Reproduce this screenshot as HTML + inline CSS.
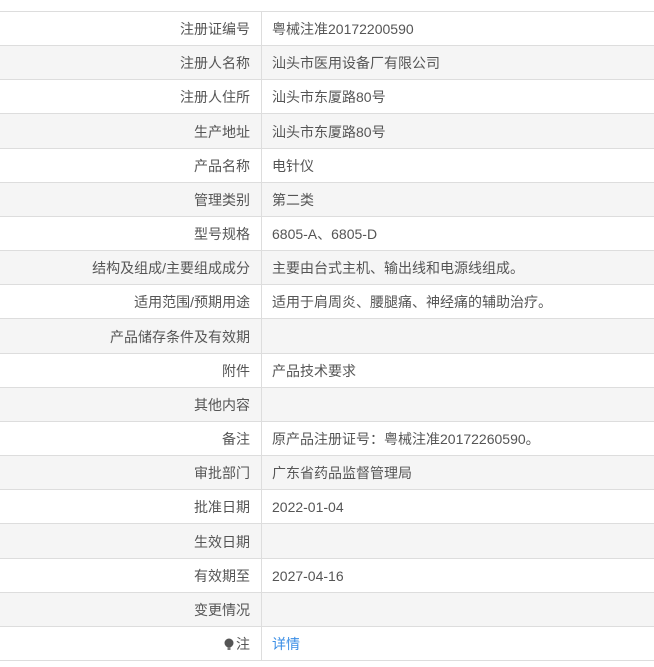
<!DOCTYPE html>
<html><head><meta charset="utf-8"><style>
body{margin:0;width:654px;height:667px;background:#fff;font-family:"Liberation Sans","Noto Sans CJK SC",sans-serif;font-size:14px;color:#555;position:relative;overflow:hidden}
.r{position:absolute;left:0;width:654px;border-top:1px solid #ddd;box-sizing:border-box}
.r.g{background:#f5f5f5}
.l{position:absolute;left:0;width:250px;text-align:right;top:1px;bottom:0;display:flex;align-items:center;justify-content:flex-end}
.v{position:absolute;left:272px;top:1px;bottom:0;display:flex;align-items:center}
.d{position:absolute;left:261px;top:0;bottom:0;width:1px;background:#ddd}
a{color:#3a8ee6;text-decoration:none}
</style></head><body>
<div id="t"></div>
<script>
var rows=[["注册证编号","粤械注准20172200590"],["注册人名称","汕头市医用设备厂有限公司"],["注册人住所","汕头市东厦路80号"],["生产地址","汕头市东厦路80号"],["产品名称","电针仪"],["管理类别","第二类"],["型号规格","6805-A、6805-D"],["结构及组成/主要组成成分","主要由台式主机、输出线和电源线组成。"],["适用范围/预期用途","适用于肩周炎、腰腿痛、神经痛的辅助治疗。"],["产品储存条件及有效期",""],["附件","产品技术要求"],["其他内容",""],["备注","原产品注册证号：粤械注准20172260590。"],["审批部门","广东省药品监督管理局"],["批准日期","2022-01-04"],["生效日期",""],["有效期至","2027-04-16"],["变更情况",""],["<svg width=\"10\" height=\"13\" viewBox=\"0 0 10 13\" style=\"margin-right:2px\"><circle cx=\"5\" cy=\"5\" r=\"4.5\" fill=\"#555\"/><rect x=\"3.5\" y=\"9\" width=\"3\" height=\"3\" fill=\"#777\"/></svg>注","<a>详情</a>"]];
var h="";
for(var i=0;i<rows.length;i++){var t=Math.round(11+i*34.16),b=Math.round(11+(i+1)*34.16);
h+='<div class="r'+(i%2?' g':'')+'" style="top:'+t+'px;height:'+(b-t)+'px'+(i==rows.length-1?';border-bottom:1px solid #ddd;height:'+(b-t+1)+'px':'')+'"><div class="l">'+rows[i][0]+'</div><div class="d"></div><div class="v">'+rows[i][1]+'</div></div>';}
document.getElementById("t").innerHTML=h;
</script>
</body></html>
